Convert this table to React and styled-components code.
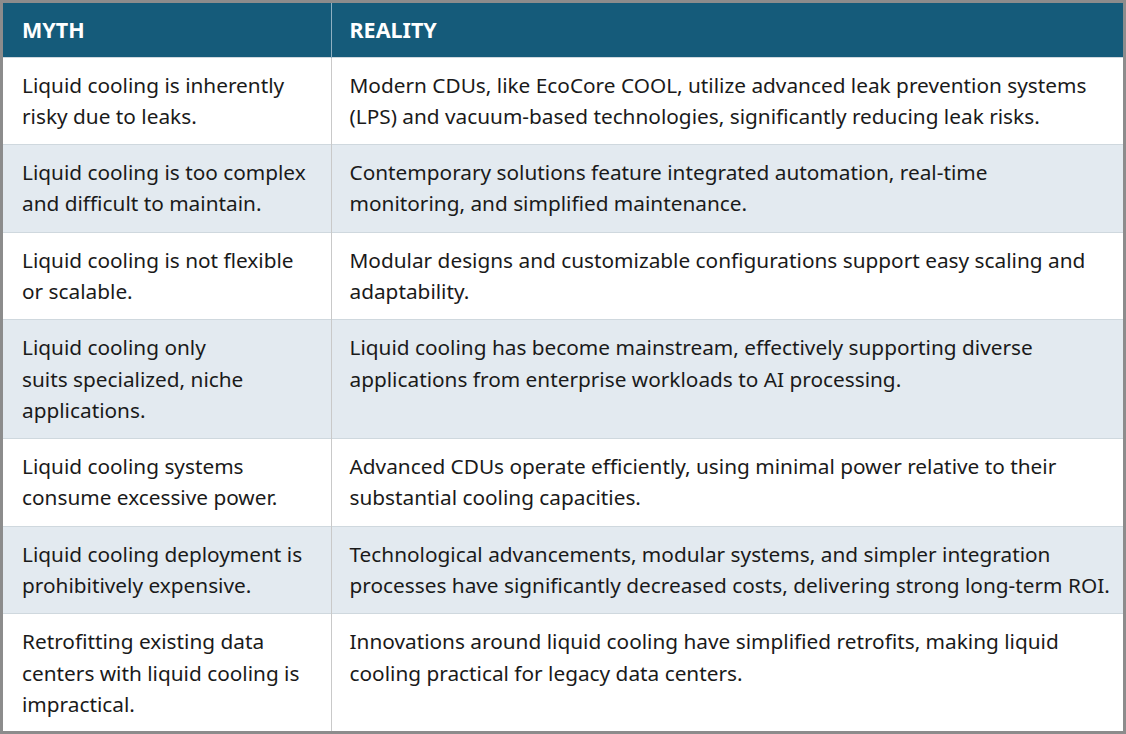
import React from 'react'
import styled, { createGlobalStyle } from 'styled-components'

const GlobalStyle = createGlobalStyle`
  html, body {
    margin: 0;
    padding: 0;
    background: #ffffff;
  }
`

const Frame = styled.div`
  box-sizing: border-box;
  width: 1126px;
  height: 734px;
  border: 3px solid #8c8c8c;
  background: #ffffff;
  overflow: hidden;
`

const Table = styled.table`
  width: 100%;
  border-collapse: collapse;
  table-layout: fixed;
  font-family: "Noto Sans", "Open Sans", sans-serif;
  color: #1a1a1a;
`

const HeadCell = styled.th`
  background: #155b7a;
  color: #ffffff;
  font-size: 21.5px;
  font-weight: 700;
  text-align: left;
  height: 54px;
  padding: 0 4px 0 ${props => (props.first ? '19px' : '18px')};
  box-sizing: border-box;
  border-left: ${props => (props.first ? 'none' : '1px solid #8fb0c2')};
`

const Row = styled.tr`
  background: ${props => (props.striped ? '#e3eaf0' : '#ffffff')};
  border-top: 1px solid #cfd8de;
`

const Cell = styled.td`
  vertical-align: top;
  font-size: 20.8px;
  line-height: 31.3px;
  padding: 12px ${props => (props.first ? '12px' : '2px')} 12px ${props => (props.first ? '19px' : '18px')};
  border-left: ${props => (props.first ? 'none' : '1px solid #c9c9c9')};
`

const rows = [
  ['Liquid cooling is inherently risky due to leaks.', 'Modern CDUs, like EcoCore COOL, utilize advanced leak prevention systems (LPS) and vacuum-based technologies, significantly reducing leak risks.'],
  ['Liquid cooling is too complex and difficult to maintain.', <>Contemporary solutions feature integrated automation, real-time<br />monitoring, and simplified maintenance.</>],
  ['Liquid cooling is not flexible or scalable.', 'Modular designs and customizable configurations support easy scaling and adaptability.'],
  [<>Liquid cooling only<br />suits specialized, niche applications.</>, 'Liquid cooling has become mainstream, effectively supporting diverse applications from enterprise workloads to AI processing.'],
  ['Liquid cooling systems consume excessive power.', 'Advanced CDUs operate efficiently, using minimal power relative to their substantial cooling capacities.'],
  ['Liquid cooling deployment is prohibitively expensive.', 'Technological advancements, modular systems, and simpler integration processes have significantly decreased costs, delivering strong long-term ROI.'],
  ['Retrofitting existing data centers with liquid cooling is impractical.', 'Innovations around liquid cooling have simplified retrofits, making liquid cooling practical for legacy data centers.'],
]

const App = () => {
  return (
    <>
      <GlobalStyle />
      <Frame>
        <Table>
          <colgroup>
            <col style={{ width: '328px' }} />
            <col />
          </colgroup>
          <thead>
            <tr>
              <HeadCell first>MYTH</HeadCell>
              <HeadCell>REALITY</HeadCell>
            </tr>
          </thead>
          <tbody>
            {rows.map((r, i) => (
              <Row key={i} striped={i % 2 === 1}>
                <Cell first>{r[0]}</Cell>
                <Cell>{r[1]}</Cell>
              </Row>
            ))}
          </tbody>
        </Table>
      </Frame>
    </>
  )
}

export default App
